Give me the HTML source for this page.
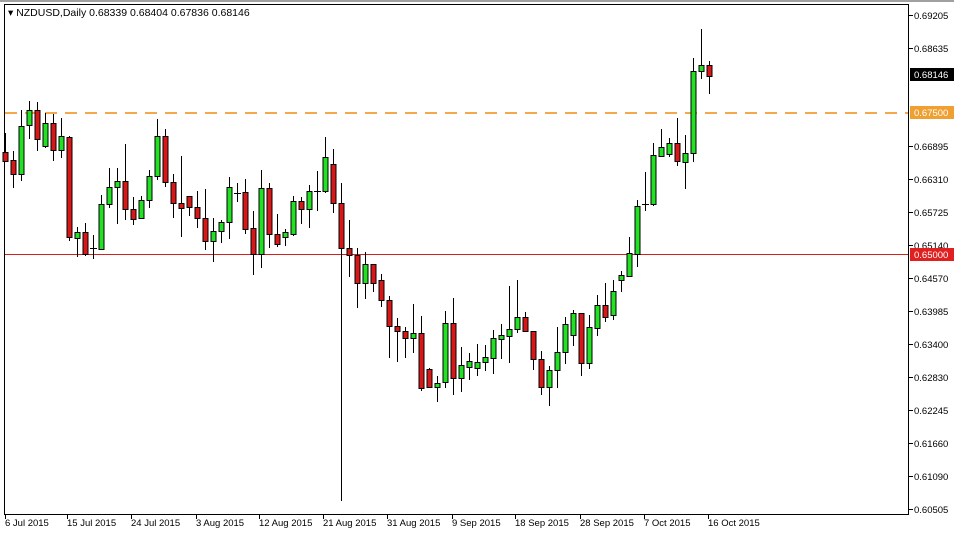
<!DOCTYPE html>
<html><head><meta charset="utf-8"><style>
body{margin:0;width:954px;height:533px;background:#fff;overflow:hidden;font-family:"Liberation Sans",sans-serif;}
svg{position:absolute;left:0;top:0}
.g{fill:#22e022;stroke:#000}.r{fill:#d81818;stroke:#000}
</style></head><body>
<svg width="954" height="533" xmlns="http://www.w3.org/2000/svg" font-family="Liberation Sans, sans-serif" font-size="9.5">
<rect x="0" y="0" width="954" height="2" fill="#a0a0a0"/>
<rect x="4.5" y="4.5" width="904" height="510" fill="#fff" stroke="#000"/>
<line x1="5" y1="113" x2="908" y2="113" stroke="#f08c10" stroke-width="1.4" stroke-dasharray="12,8"/>
<line x1="5" y1="254.5" x2="908" y2="254.5" stroke="#d02020"/>
<text x="8" y="16" font-size="10.5" fill="#000">▾ NZDUSD,Daily  0.68339 0.68404 0.67836 0.68146</text>
<path stroke="#000" fill="none" d="M5.5 133V162M13.5 151V188M21.5 110V181M29.5 101V139M37.5 102V151M45.5 113V148M53.5 114V161M61.5 118V158M69.5 136V241M77.5 227V257M85.5 223V256M93.5 235V259M101.5 195V250M109.5 168V208M117.5 168V224M125.5 144V220M133.5 197V225M141.5 196V219M149.5 170V208M157.5 119V180M165.5 129V187M173.5 174V218M181.5 156V237M189.5 196V216M197.5 191V228M205.5 189V250M213.5 218V262M221.5 220V243M229.5 177V239M237.5 183V202M245.5 179V234M253.5 211V275M261.5 170V268M269.5 183V248M277.5 214V247M285.5 229V246M293.5 196V236M301.5 197V224M309.5 185V228M317.5 171V211M325.5 137V193M333.5 149V213M341.5 183V501M349.5 220V277M357.5 248V308M365.5 252V299M373.5 264V292M381.5 274V307M389.5 296V358M397.5 318V362M405.5 327V358M413.5 304V353M421.5 316V391M429.5 368V388M437.5 376V402M445.5 311V388M453.5 298V395M461.5 347V392M469.5 353V380M477.5 344V376M485.5 345V371M493.5 330V374M501.5 324V359M509.5 286V363M517.5 280V333M525.5 312V331M533.5 331V370M541.5 351V395M549.5 366V406M557.5 327V388M565.5 317V364M573.5 310V346M581.5 313V376M589.5 315V369M597.5 295V336M605.5 283V322M613.5 280V320M621.5 271V292M629.5 237V277M637.5 200V267M645.5 172V211M653.5 143V206M661.5 129V157M669.5 138V157M677.5 118V166M685.5 135V189M693.5 58V162M701.5 29V79M709.5 61V94M90 248.5H97M234 193.5H241M314 191.5H321M642 204.5H649"/>
<g>
<rect class="r" x="3" y="152.5" width="5" height="9"/>
<rect class="r" x="11" y="160.5" width="5" height="14"/>
<rect class="g" x="19" y="126.5" width="5" height="48"/>
<rect class="g" x="27" y="110.5" width="5" height="15"/>
<rect class="r" x="35" y="110.5" width="5" height="29"/>
<rect class="g" x="43" y="123.5" width="5" height="23"/>
<rect class="r" x="51" y="123.5" width="5" height="27"/>
<rect class="g" x="59" y="136.5" width="5" height="14"/>
<rect class="r" x="67" y="137.5" width="5" height="100"/>
<rect class="g" x="75" y="232.5" width="5" height="6"/>
<rect class="r" x="83" y="232.5" width="5" height="22"/>
<rect class="g" x="99" y="204.5" width="5" height="45"/>
<rect class="g" x="107" y="187.5" width="5" height="17"/>
<rect class="g" x="115" y="181.5" width="5" height="6"/>
<rect class="r" x="123" y="181.5" width="5" height="28"/>
<rect class="r" x="131" y="209.5" width="5" height="10"/>
<rect class="g" x="139" y="200.5" width="5" height="18"/>
<rect class="g" x="147" y="176.5" width="5" height="24"/>
<rect class="g" x="155" y="136.5" width="5" height="40"/>
<rect class="r" x="163" y="136.5" width="5" height="46"/>
<rect class="r" x="171" y="182.5" width="5" height="21"/>
<rect class="r" x="179" y="203.5" width="5" height="5"/>
<rect class="r" x="187" y="196.5" width="5" height="11"/>
<rect class="r" x="195" y="207.5" width="5" height="11"/>
<rect class="r" x="203" y="218.5" width="5" height="23"/>
<rect class="g" x="211" y="231.5" width="5" height="10"/>
<rect class="g" x="219" y="222.5" width="5" height="9"/>
<rect class="g" x="227" y="187.5" width="5" height="35"/>
<rect class="r" x="243" y="192.5" width="5" height="37"/>
<rect class="r" x="251" y="228.5" width="5" height="26"/>
<rect class="g" x="259" y="188.5" width="5" height="66"/>
<rect class="r" x="267" y="188.5" width="5" height="46"/>
<rect class="r" x="275" y="234.5" width="5" height="10"/>
<rect class="g" x="283" y="232.5" width="5" height="5"/>
<rect class="g" x="291" y="201.5" width="5" height="33"/>
<rect class="r" x="299" y="201.5" width="5" height="8"/>
<rect class="g" x="307" y="191.5" width="5" height="18"/>
<rect class="g" x="323" y="157.5" width="5" height="34"/>
<rect class="r" x="331" y="164.5" width="5" height="39"/>
<rect class="r" x="339" y="203.5" width="5" height="45"/>
<rect class="r" x="347" y="248.5" width="5" height="7"/>
<rect class="r" x="355" y="255.5" width="5" height="28"/>
<rect class="g" x="363" y="264.5" width="5" height="19"/>
<rect class="r" x="371" y="264.5" width="5" height="19"/>
<rect class="r" x="379" y="280.5" width="5" height="20"/>
<rect class="r" x="387" y="300.5" width="5" height="26"/>
<rect class="r" x="395" y="326.5" width="5" height="5"/>
<rect class="r" x="403" y="331.5" width="5" height="7"/>
<rect class="g" x="411" y="333.5" width="5" height="5"/>
<rect class="r" x="419" y="333.5" width="5" height="55"/>
<rect class="r" x="427" y="369.5" width="5" height="18"/>
<rect class="g" x="435" y="383.5" width="5" height="4"/>
<rect class="g" x="443" y="323.5" width="5" height="59"/>
<rect class="r" x="451" y="323.5" width="5" height="55"/>
<rect class="g" x="459" y="365.5" width="5" height="13"/>
<rect class="g" x="467" y="361.5" width="5" height="6"/>
<rect class="g" x="475" y="362.5" width="5" height="6"/>
<rect class="g" x="483" y="357.5" width="5" height="5"/>
<rect class="g" x="491" y="338.5" width="5" height="20"/>
<rect class="g" x="499" y="335.5" width="5" height="4"/>
<rect class="g" x="507" y="329.5" width="5" height="7"/>
<rect class="g" x="515" y="317.5" width="5" height="12"/>
<rect class="r" x="523" y="317.5" width="5" height="14"/>
<rect class="r" x="531" y="331.5" width="5" height="28"/>
<rect class="r" x="539" y="359.5" width="5" height="28"/>
<rect class="g" x="547" y="370.5" width="5" height="17"/>
<rect class="g" x="555" y="352.5" width="5" height="18"/>
<rect class="g" x="563" y="324.5" width="5" height="28"/>
<rect class="g" x="571" y="313.5" width="5" height="22"/>
<rect class="r" x="579" y="313.5" width="5" height="50"/>
<rect class="g" x="587" y="327.5" width="5" height="36"/>
<rect class="g" x="595" y="305.5" width="5" height="23"/>
<rect class="r" x="603" y="305.5" width="5" height="12"/>
<rect class="g" x="611" y="291.5" width="5" height="24"/>
<rect class="g" x="619" y="275.5" width="5" height="5"/>
<rect class="g" x="627" y="253.5" width="5" height="23"/>
<rect class="g" x="635" y="206.5" width="5" height="48"/>
<rect class="g" x="651" y="155.5" width="5" height="49"/>
<rect class="g" x="659" y="147.5" width="5" height="9"/>
<rect class="g" x="667" y="143.5" width="5" height="11"/>
<rect class="r" x="675" y="143.5" width="5" height="18"/>
<rect class="g" x="683" y="153.5" width="5" height="9"/>
<rect class="g" x="691" y="71.5" width="5" height="82"/>
<rect class="g" x="699" y="65.5" width="5" height="6"/>
<rect class="r" x="707" y="65.5" width="5" height="11"/>
</g>
<g fill="#000">
<text x="914" y="19">0.69205</text>
<text x="914" y="52">0.68635</text>
<text x="914" y="150">0.66895</text>
<text x="914" y="183">0.66310</text>
<text x="914" y="216">0.65725</text>
<text x="914" y="249">0.65140</text>
<text x="914" y="282">0.64570</text>
<text x="914" y="315">0.63985</text>
<text x="914" y="348">0.63400</text>
<text x="914" y="381">0.62830</text>
<text x="914" y="414">0.62245</text>
<text x="914" y="447">0.61660</text>
<text x="914" y="480">0.61090</text>
<text x="914" y="513">0.60505</text>
</g>
<path stroke="#000" d="M909 15.5h4M909 48.5h4M909 146.5h4M909 179.5h4M909 212.5h4M909 245.5h4M909 278.5h4M909 311.5h4M909 344.5h4M909 377.5h4M909 410.5h4M909 443.5h4M909 476.5h4M909 509.5h4"/>
<rect x="910" y="68" width="44" height="13" fill="#000"/>
<text x="914" y="78" fill="#fff">0.68146</text>
<rect x="910" y="106" width="44" height="13" fill="#f0a030"/>
<text x="914" y="116" fill="#fff">0.67500</text>
<rect x="910" y="248" width="44" height="13" fill="#e02020"/>
<text x="914" y="258" fill="#fff">0.65000</text>
<path stroke="#000" d="M5.5 515v4M67.5 515v4M131.5 515v4M196.5 515v4M259.5 515v4M323.5 515v4M387.5 515v4M452.5 515v4M515.5 515v4M580.5 515v4M644.5 515v4M708.5 515v4"/>
<g fill="#000">
<text x="5" y="526">6 Jul 2015</text>
<text x="67" y="526">15 Jul 2015</text>
<text x="131" y="526">24 Jul 2015</text>
<text x="196" y="526">3 Aug 2015</text>
<text x="259" y="526">12 Aug 2015</text>
<text x="323" y="526">21 Aug 2015</text>
<text x="387" y="526">31 Aug 2015</text>
<text x="452" y="526">9 Sep 2015</text>
<text x="515" y="526">18 Sep 2015</text>
<text x="580" y="526">28 Sep 2015</text>
<text x="644" y="526">7 Oct 2015</text>
<text x="708" y="526">16 Oct 2015</text>
</g>
</svg>
</body></html>
